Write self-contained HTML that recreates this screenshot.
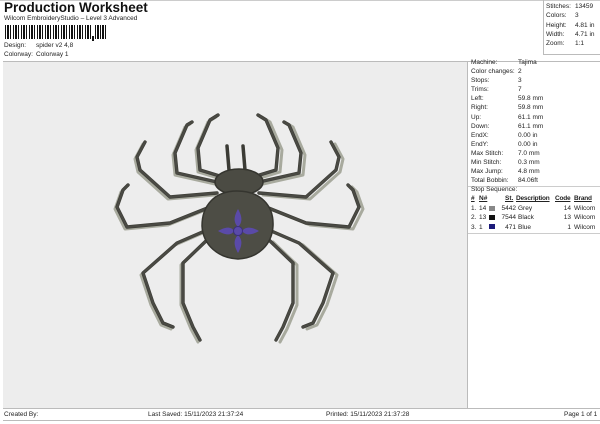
<!DOCTYPE html>
<html><head><meta charset="utf-8"><style>
*{margin:0;padding:0;box-sizing:border-box}
body{width:600px;height:424px;background:#fff;font-family:"Liberation Sans",sans-serif;color:#222;position:relative;overflow:hidden;font-size:6.5px}
.a{position:absolute;white-space:nowrap}
</style></head><body>
<div class="a" style="left:4px;top:0px;font-size:13.5px;font-weight:bold;color:#111">Production Worksheet</div>
<div class="a" style="left:4px;top:15px;font-size:6.5px">Wilcom EmbroideryStudio – Level 3 Advanced</div>
<div class="a" style="left:5px;top:25px;width:87px;height:14px;background:repeating-linear-gradient(90deg,#111 0 1px,#fff 1px 2px,#111 2px 4px,#fff 4px 5px,#111 5px 6px,#fff 6px 8px)"></div>
<div class="a" style="left:92px;top:36px;width:2px;height:5px;background:#111"></div>
<div class="a" style="left:95px;top:25px;width:11px;height:14px;background:repeating-linear-gradient(90deg,#111 0 1px,#fff 1px 2px,#111 2px 4px,#fff 4px 5px)"></div>
<div class="a" style="left:4px;top:42px">Design:</div><div class="a" style="left:36px;top:42px">spider v2 4,8</div>
<div class="a" style="left:4px;top:51px">Colorway:</div><div class="a" style="left:36px;top:51px">Colorway 1</div>
<div class="a" style="left:0;top:0;width:600px;height:1px;background:#ccc"></div>
<div class="a" style="left:543px;top:0;width:57px;height:55px;border-left:1px solid #bbb;border-bottom:1px solid #bbb"></div>
<div class="a" style="left:546px;top:2px;line-height:9.3px">Stitches:<br>Colors:<br>Height:<br>Width:<br>Zoom:</div>
<div class="a" style="left:575px;top:2px;line-height:9.3px">13459<br>3<br>4.81 in<br>4.71 in<br>1:1</div>
<div class="a" style="left:3px;top:61px;width:597px;height:1px;background:#bbb"></div>
<div class="a" style="left:3px;top:62px;width:464px;height:346px;background:#ededed"></div>
<div class="a" style="left:467px;top:62px;width:1px;height:346px;background:#bbb"></div>
<div class="a" style="left:471px;top:58px;line-height:9.1px">Machine:<br>Color changes:<br>Stops:<br>Trims:<br>Left:<br>Right:<br>Up:<br>Down:<br>EndX:<br>EndY:<br>Max Stitch:<br>Min Stitch:<br>Max Jump:<br>Total Bobbin:</div>
<div class="a" style="left:518px;top:58px;line-height:9.1px">Tajima<br>2<br>3<br>7<br>59.8 mm<br>59.8 mm<br>61.1 mm<br>61.1 mm<br>0.00 in<br>0.00 in<br>7.0 mm<br>0.3 mm<br>4.8 mm<br>84.06ft</div>
<div class="a" style="left:468px;top:186px;width:132px;height:1px;background:#ccc"></div>
<div class="a" style="left:471px;top:186px">Stop Sequence:</div>
<div class="a" style="left:471px;top:195px;font-weight:bold;text-decoration:underline">#</div>
<div class="a" style="left:479px;top:195px;font-weight:bold;text-decoration:underline">N#</div>
<div class="a" style="left:505px;top:195px;font-weight:bold;text-decoration:underline">St.</div>
<div class="a" style="left:516px;top:195px;font-weight:bold;text-decoration:underline;letter-spacing:-0.2px">Description</div>
<div class="a" style="left:555px;top:195px;font-weight:bold;text-decoration:underline;letter-spacing:-0.2px">Code</div>
<div class="a" style="left:574px;top:195px;font-weight:bold;text-decoration:underline;letter-spacing:-0.2px">Brand</div>
<div class="a" style="left:471px;top:204px;line-height:9.3px">1.<br>2.<br>3.</div>
<div class="a" style="left:479px;top:204px;line-height:9.3px">14<br>13<br>1</div>
<div class="a" style="left:489px;top:206px;width:6px;height:5px;background:#888"></div>
<div class="a" style="left:489px;top:215px;width:6px;height:5px;background:#111"></div>
<div class="a" style="left:489px;top:224px;width:6px;height:5px;background:#1c1a7a"></div>
<div class="a" style="left:496px;top:204px;width:20px;text-align:right;line-height:9.3px">5442<br>7544<br>471</div>
<div class="a" style="left:518px;top:204px;line-height:9.3px">Grey<br>Black<br>Blue</div>
<div class="a" style="left:560px;top:204px;width:11px;text-align:right;line-height:9.3px">14<br>13<br>1</div>
<div class="a" style="left:574px;top:204px;line-height:9.3px">Wilcom<br>Wilcom<br>Wilcom</div>
<div class="a" style="left:468px;top:233px;width:132px;height:1px;background:#ccc"></div>
<div class="a" style="left:3px;top:408px;width:597px;height:1px;background:#bbb"></div>
<div class="a" style="left:3px;top:420px;width:597px;height:1px;background:#bbb"></div>
<div class="a" style="left:4px;top:411px">Created By:</div>
<div class="a" style="left:148px;top:411px">Last Saved: 15/11/2023 21:37:24</div>
<div class="a" style="left:326px;top:411px">Printed: 15/11/2023 21:37:28</div>
<div class="a" style="left:564px;top:411px">Page 1 of 1</div>
<svg class="a" style="left:0;top:0" width="600" height="424" viewBox="0 0 600 424">
<defs>
<g id="legs" fill="none" stroke-linejoin="round" stroke-linecap="round">
<polyline points="217,182 177,173 175,153 187,125 192,122"/>
<polyline points="223,177 200,170 198,148 210,120 218,115"/>
<polyline points="217,193 170,197 140,170 137,157 145,142"/>
<polyline points="210,207 170,223 127,227 117,207 123,190 128,185"/>
<polyline points="207,230 177,243 143,273 153,303 163,323 173,327"/>
<polyline points="207,240 183,263 183,303 193,327 200,340"/>
</g>
</defs>
<g stroke="#a8aa9e" stroke-width="3"><use href="#legs" transform="translate(-2,2)"/><use href="#legs" transform="translate(478,0) scale(-1,1) translate(-2,2)"/></g>
<g stroke="#3b3b35" stroke-width="3.4"><use href="#legs"/><use href="#legs" transform="translate(476,0) scale(-1,1)"/></g>
<g stroke="#4a4a44" stroke-width="2.2"><use href="#legs"/><use href="#legs" transform="translate(476,0) scale(-1,1)"/></g>
<g stroke="#3b3b35" stroke-width="3.5" stroke-linecap="round"><line x1="227" y1="146" x2="229" y2="170"/><line x1="243" y1="146" x2="245" y2="170"/></g>
<ellipse cx="239" cy="182" rx="24" ry="13" fill="#4b4b43" stroke="#35352f" stroke-width="1.5"/>
<path d="M237,191 C260,191 274,205 273,226 C272,245 258,258 238,259 C218,258 203,245 202,226 C202,205 215,191 237,191Z" fill="#4d4d45" stroke="#35352f" stroke-width="1.5"/>
<g fill="#5a4aa8">
<path d="M238,209 C242,216 243,222 238,227 C233,222 234,216 238,209Z"/>
<path d="M238,253 C242,246 243,240 238,235 C233,240 234,246 238,253Z"/>
<path d="M218,231 C225,227 231,226 234,231 C231,236 225,235 218,231Z"/>
<path d="M259,231 C252,227 246,226 242,231 C246,236 252,235 259,231Z"/>
<circle cx="238" cy="231" r="4.5" stroke="#3a2e80" stroke-width="1"/>
</g>
</svg>
</body></html>
